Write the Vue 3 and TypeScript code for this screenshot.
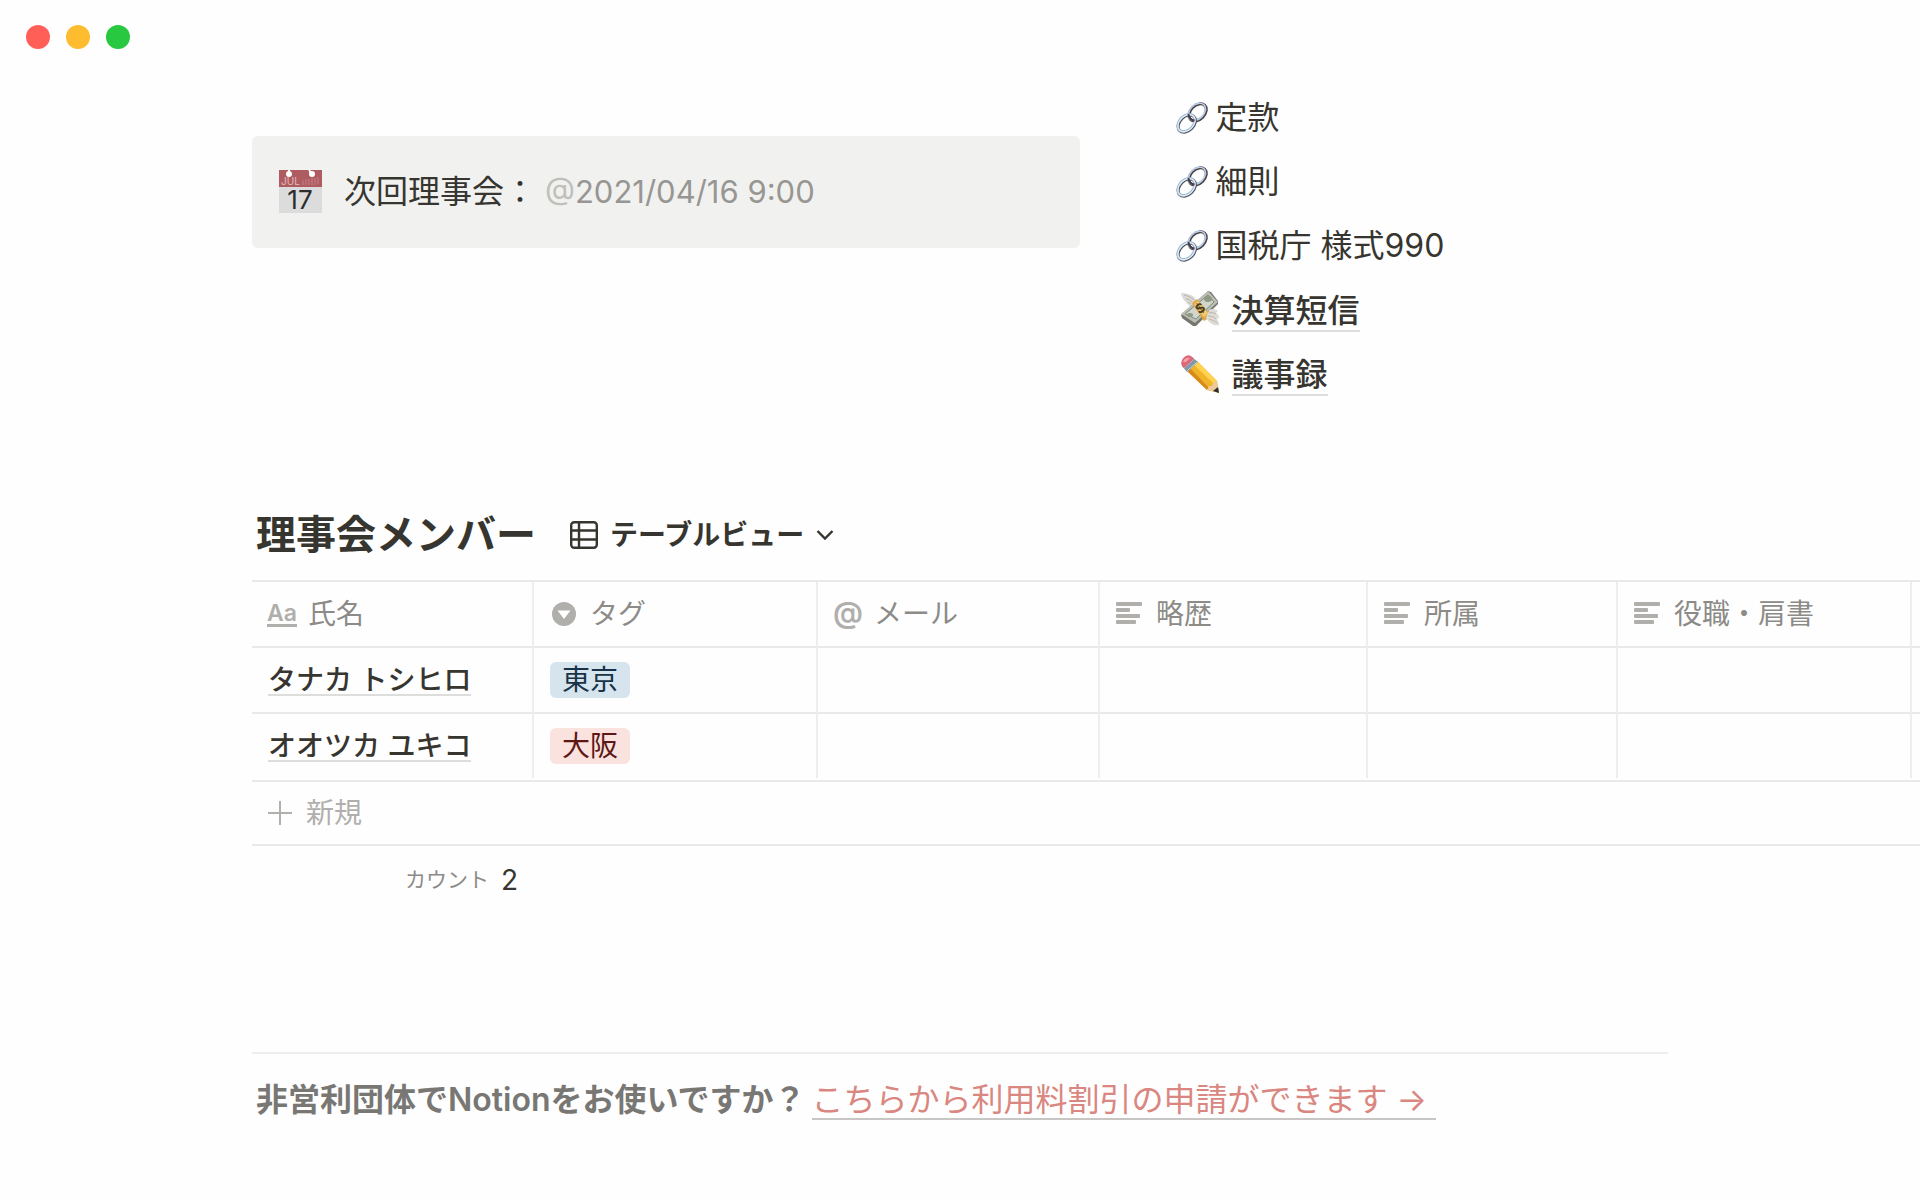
<script setup lang="ts">
type Kind = 'title' | 'select' | 'mail' | 'text'

interface Column {
  label: string
  kind: Kind
}

interface Member {
  name: string
  tag: string
  tone: 'blue' | 'red'
}

const columns: Column[] = [
  { label: '氏名', kind: 'title' },
  { label: 'タグ', kind: 'select' },
  { label: 'メール', kind: 'mail' },
  { label: '略歴', kind: 'text' },
  { label: '所属', kind: 'text' },
  { label: '役職・肩書', kind: 'text' },
]

const members: Member[] = [
  { name: 'タナカ トシヒロ', tag: '東京', tone: 'blue' },
  { name: 'オオツカ ユキコ', tag: '大阪', tone: 'red' },
]

const documents: string[] = ['定款', '細則', '国税庁 様式990']
</script>

<template>
  <div class="window" lang="ja">
    <header class="titlebar">
      <span class="dot close"></span>
      <span class="dot minimize"></span>
      <span class="dot expand"></span>
    </header>

    <main>
      <section class="intro">
        <div class="callout">
          <svg class="calendar" viewBox="0 0 48 48" aria-hidden="true">
            <rect x="3" y="2" width="43" height="43" fill="#dcdcdc" />
            <rect x="3" y="2" width="43" height="17" fill="#ae5c60" />
            <circle cx="13" cy="6" r="3" fill="#fff" />
            <path d="M13 6V2M36 6l-3-4" stroke="#fff" stroke-width="2" />
            <circle cx="36" cy="6" r="3" fill="#fff" />
            <path d="M27 12v5M30 11v6M33 11v6M36 10v7M39 10v7M42 9v7" stroke="#c28085" stroke-width="1" />
            <text x="5" y="17" font-size="10" fill="#e3babb">JUL</text>
            <text x="24" y="41" font-size="26" text-anchor="middle" fill="#2d2d2d">17</text>
          </svg>
          <p>次回理事会： <span class="date"><span class="at">@</span>2021/04/16 9:00</span></p>
        </div>

        <nav class="links">
          <a v-for="item in documents" :key="item" class="doc" href="#">
            <svg class="chain" viewBox="0 0 32 32" aria-hidden="true">
              <g fill="none">
                <ellipse cx="21.600" cy="10.400" rx="7" ry="10" transform="rotate(45 21.600 10.400)" stroke="#4a3f48" stroke-width="3" />
                <ellipse cx="20.900" cy="9.900" rx="7" ry="10" transform="rotate(45 20.900 9.900)" stroke="#b9cfe6" stroke-width="1.600" />
                <ellipse cx="10.800" cy="21.600" rx="7" ry="10" transform="rotate(45 10.800 21.600)" stroke="#53525a" stroke-width="3" />
                <ellipse cx="10.200" cy="20.900" rx="7" ry="10" transform="rotate(45 10.200 20.900)" stroke="#9dbbdc" stroke-width="2.400" />
                <ellipse cx="10.500" cy="21.200" rx="7" ry="10" transform="rotate(45 10.500 21.200)" stroke="#e4edf6" stroke-width="1.200" />
                <path d="M12.500 12c0 4 3 6.500 6 6.500" stroke="#4a3f48" stroke-width="2" />
              </g>
            </svg>
            <span>{{ item }}</span>
          </a>
          <a class="page" href="#">
            <svg viewBox="0 0 40 40" aria-hidden="true">
              <path d="M1 3c5 0 9 1 13 4l3 4-6 6C8 16 9 14 6 13c1-1-2-2-3-4 1 0-2-3-2-6z" fill="#dcdad4" />
              <path d="M4 5c4 1 7 2 10 5M6 9c2 0 5 1 6 3M8 12l3 2" fill="none" stroke="#b8b6af" />
              <path d="M1 25L28 1l3 1 7 9v3L16 36h-3L2 28z" fill="#75776f" />
              <path d="M1 24L28 1l10 11L15 33z" fill="#b9bdb2" />
              <path d="M5 24L28 5l6 7-18 17z" fill="#d2d5ca" stroke="#858b7e" />
              <ellipse cx="28" cy="9" rx="4" ry="3" fill="#8e9986" />
              <ellipse cx="10" cy="25" rx="3" ry="2" fill="#8e9986" />
              <path d="M12 13l5-4 12 14v5l-5 3z" fill="#dfa843" />
              <path d="M14 14l4-3 10 12-4 4z" fill="#f1ca72" />
              <text x="20" y="23" font-size="13" font-weight="700" text-anchor="middle" transform="rotate(-35 20 18)" fill="#493a20">$</text>
              <path d="M39 35c-5 1-9-1-13-7l3-8c3-2 6-1 9 1l-2 2c2 1 3 2 3 5l-2 1c1 2 2 3 2 6z" fill="#dedcd5" />
              <path d="M29 23c3-1 5 0 7 1M28 26c4 0 6 1 8 3M29 29c3 1 6 2 8 4" fill="none" stroke="#b9b6ae" />
            </svg>
            <span>決算短信</span>
          </a>
          <a class="page" href="#">
            <svg viewBox="0 0 40 40" aria-hidden="true">
              <path d="M17 7L37 27l2 12-12-3L7 17z" fill="#f0b429" />
              <path d="M17 7l20 20-4 2-20-19z" fill="#ffd251" />
              <path d="M10 14l19 20-2 2L7 17z" fill="#d78a1c" />
              <path d="M37 27l2 12-12-3 2-4 3 0 1-3z" fill="#edcb9c" />
              <path d="M39 39l-1-6-5 4z" fill="#2f2c2a" />
              <path d="M12 3l6 5L7 18l-5-6z" fill="#8497a8" />
              <path d="M14 5L4 14M17 8L7 17" stroke="#c5d2dc" stroke-width="1" />
              <path d="M2 12C-1 7 6-1 11 2l3 3L4 14z" fill="#dc6878" />
              <path d="M3 8c1-3 3-5 7-4L6 8z" fill="#f4a1aa" />
            </svg>
            <span>議事録</span>
          </a>
        </nav>
      </section>

      <section class="members">
        <div class="heading">
          <h2>理事会メンバー</h2>
          <button type="button" class="view">
            <svg class="grid-icon" viewBox="0 0 28 28" aria-hidden="true">
              <g fill="none" stroke="currentColor" stroke-width="2.400">
                <rect x="1.200" y="1.200" width="25.600" height="25.600" rx="3" />
                <path d="M1 9.500h26M1 18.500h26M9 1v26" />
              </g>
            </svg>
            <span>テーブルビュー</span>
            <svg class="chevron" viewBox="0 0 18 12" aria-hidden="true">
              <path d="M1.500 2L9 9.500 16.500 2" fill="none" stroke="currentColor" stroke-width="2.400" />
            </svg>
          </button>
        </div>

        <table>
          <colgroup>
            <col class="c-name" />
            <col class="c-tag" />
            <col class="c-mail" />
            <col class="c-bio" />
            <col class="c-org" />
            <col class="c-role" />
            <col />
          </colgroup>
          <thead>
            <tr>
              <th v-for="column in columns" :key="column.label" scope="col">
                <span class="label">
                  <span class="kind" aria-hidden="true">
                    <span v-if="column.kind === 'title'" class="aa">Aa</span>
                    <svg v-else-if="column.kind === 'select'" viewBox="0 0 28 28">
                      <circle cx="14" cy="14" r="12" fill="currentColor" />
                      <path d="M7.500 10.500h13L14 19z" fill="#fff" />
                    </svg>
                    <span v-else-if="column.kind === 'mail'" class="mail">@</span>
                    <svg v-else viewBox="0 0 28 28">
                      <g fill="currentColor">
                        <rect x="0" y="2" width="26" height="4" rx="1" />
                        <rect x="0" y="8" width="14" height="4" rx="1" />
                        <rect x="0" y="14" width="24" height="4" rx="1" />
                        <rect x="0" y="20" width="20" height="4" rx="1" />
                      </g>
                    </svg>
                  </span>
                  {{ column.label }}
                </span>
              </th>
              <td></td>
            </tr>
          </thead>
          <tbody>
            <tr v-for="member in members" :key="member.name">
              <td><a class="name" href="#">{{ member.name }}</a></td>
              <td><span class="tag" :class="member.tone">{{ member.tag }}</span></td>
              <td></td>
              <td></td>
              <td></td>
              <td></td>
              <td></td>
            </tr>
          </tbody>
        </table>

        <button type="button" class="add">
          <svg viewBox="0 0 24 24" aria-hidden="true">
            <path d="M12 0v24M0 12h24" stroke="currentColor" stroke-width="2" />
          </svg>
          新規
        </button>
        <div class="count"><span>カウント</span><strong>{{ members.length }}</strong></div>
      </section>

      <footer>
        <strong>非営利団体でNotionをお使いですか？</strong>
        <a href="#">こちらから利用料割引の申請ができます →&nbsp;</a>
      </footer>
    </main>
  </div>
</template>

<style>
body {
  margin: 0;
  background: #fefefe;
}
</style>

<style scoped>
.window {
  overflow: hidden;
  color: #37352f;
  font-family: Inter, 'Noto Sans CJK JP', sans-serif;
  font-size: 32px;
  line-height: 64px;
}

a {
  color: inherit;
  text-decoration: none;
}

button {
  border: 0;
  padding: 0;
  background: none;
  color: inherit;
  font: inherit;
  cursor: pointer;
}

svg {
  display: block;
  flex: none;
}

.titlebar {
  display: flex;
  align-items: center;
  gap: 16px;
  height: 74px;
  padding: 0 26px;
}

.dot {
  width: 24px;
  height: 24px;
  border-radius: 50%;
}

.close {
  background: #ff5f57;
}

.minimize {
  background: #febc2e;
}

.expand {
  background: #28c840;
}

main {
  padding: 12px 0 68px 252px;
}

.intro {
  display: grid;
  grid-template-columns: 5fr 3fr;
  gap: 92px;
  align-items: start;
  margin-right: 252px;
}

.callout {
  display: flex;
  align-items: center;
  gap: 20px;
  margin-top: 50px;
  padding: 24px;
  border-radius: 6px;
  background: #f1f1ef;
}

.calendar {
  width: 48px;
  height: 48px;
}

.callout p {
  margin: 0;
}

.date {
  color: #979693;
  font-size: 31px;
}

.at {
  color: #bfbfbc;
}

.links {
  display: flex;
  flex-direction: column;
  padding-left: 4px;
}

.doc,
.page {
  display: flex;
  align-items: center;
  height: 64px;
}

.doc {
  gap: 8px;
}

.chain {
  width: 32px;
  height: 32px;
}

.page {
  gap: 12px;
  padding-left: 4px;
  font-weight: 500;
}

.page svg {
  width: 40px;
  height: 40px;
}

.page span {
  margin-top: 4px;
  border-bottom: 2px solid #dddddb;
  line-height: 38px;
}

.members {
  margin-top: 102px;
}

.heading {
  display: flex;
  align-items: center;
  gap: 34px;
  height: 54px;
  margin-bottom: 18px;
  padding-left: 4px;
}

h2 {
  margin: 0;
  font-size: 40px;
  font-weight: 700;
  line-height: 54px;
}

.view {
  display: flex;
  align-items: center;
  gap: 12px;
  font-size: 28px;
  font-weight: 600;
  line-height: 40px;
}

.grid-icon {
  width: 28px;
  height: 28px;
}

.chevron {
  width: 18px;
  height: 12px;
}

table {
  width: 100%;
  table-layout: fixed;
  border-collapse: separate;
  border-spacing: 0;
  border-top: 2px solid #e9e9e7;
  font-size: 28px;
  line-height: 36px;
}

.c-name,
.c-mail {
  width: 282px;
}

.c-tag {
  width: 284px;
}

.c-bio {
  width: 268px;
}

.c-org {
  width: 250px;
}

.c-role {
  width: 294px;
}

th,
td {
  height: 64px;
  padding: 0 14px 0 16px;
  border-right: 2px solid #eeeeec;
  border-bottom: 2px solid #e9e9e7;
  text-align: left;
  vertical-align: middle;
  white-space: nowrap;
}

th:last-child,
td:last-child {
  border-right: 0;
}

tbody tr:last-child td {
  border-bottom: 0;
}

th {
  color: #8c8b87;
  font-weight: 400;
}

.label {
  display: flex;
  align-items: center;
  gap: 12px;
}

.kind {
  display: flex;
  flex: none;
  justify-content: center;
  width: 28px;
  color: #b0afac;
}

.kind svg {
  width: 28px;
  height: 28px;
}

.aa {
  border-bottom: 3px solid;
  font-size: 23px;
  font-weight: 600;
  line-height: 22px;
}

.mail {
  padding-bottom: 4px;
  font-size: 30px;
  font-weight: 600;
  line-height: 28px;
}

.name {
  display: inline-block;
  border-bottom: 2px solid #dddddb;
  font-weight: 500;
  line-height: 28px;
}

.tag {
  display: inline-block;
  padding: 0 12px;
  border-radius: 6px;
}

.blue {
  background: #d6e4ee;
  color: #183347;
}

.red {
  background: #fae3de;
  color: #5d1715;
}

.add {
  display: flex;
  align-items: center;
  gap: 14px;
  width: 100%;
  height: 66px;
  margin-top: 2px;
  padding-left: 16px;
  border-top: 2px solid #e9e9e7;
  border-bottom: 2px solid #e9e9e7;
  color: #b0afac;
  font-size: 28px;
  line-height: 36px;
}

.add svg {
  width: 24px;
  height: 24px;
}

.count {
  display: flex;
  align-items: center;
  justify-content: flex-end;
  gap: 12px;
  width: 266px;
  height: 68px;
  font-size: 28px;
}

.count span {
  color: #8c8b87;
  font-size: 21px;
}

.count strong {
  font-weight: 400;
}

footer {
  display: flex;
  align-items: center;
  gap: 6px;
  margin: 138px 252px 0 0;
  padding: 14px 4px;
  border-top: 2px solid #ededeb;
}

footer strong {
  color: #787774;
  font-weight: 600;
}

footer a {
  margin-top: 2px;
  border-bottom: 2px solid #c7c6c4;
  color: #d98780;
  line-height: 36px;
}
</style>
